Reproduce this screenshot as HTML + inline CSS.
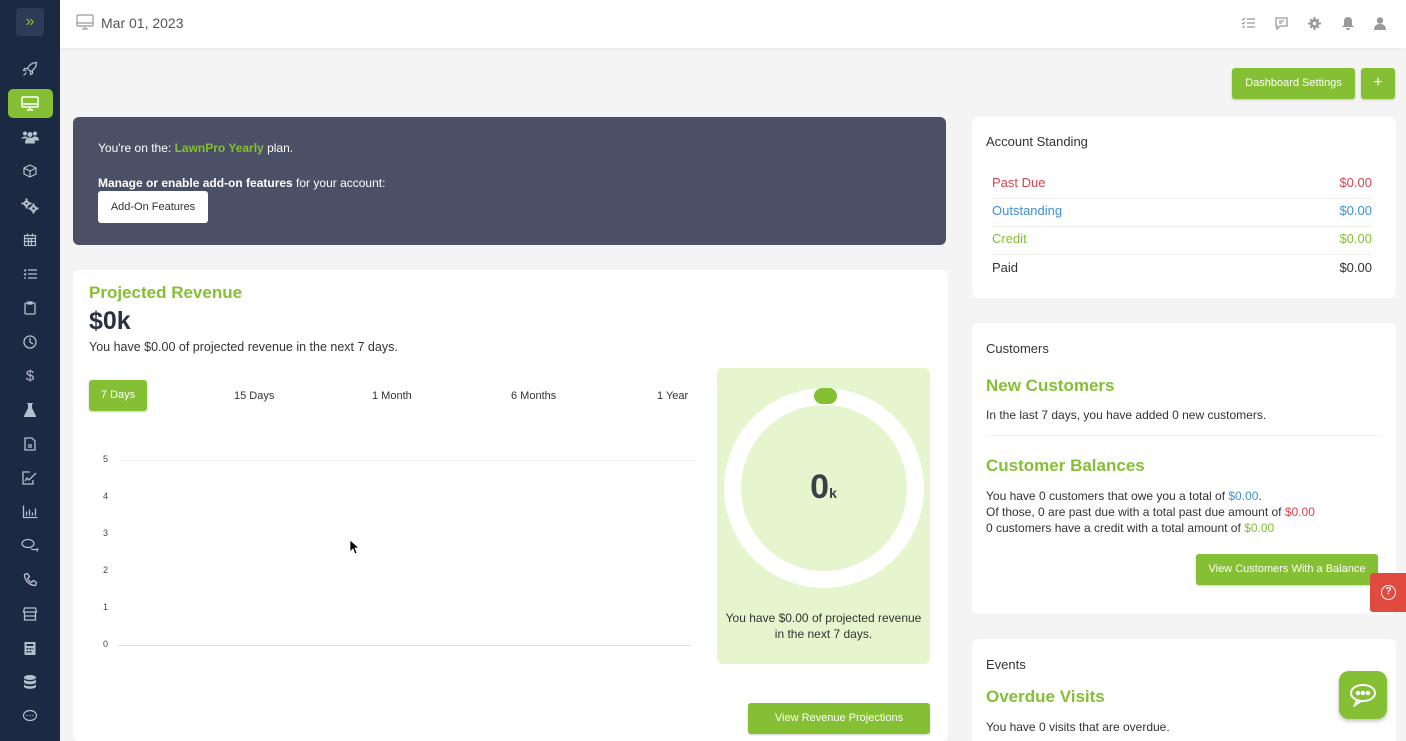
<!DOCTYPE html>
<html style="height:741px;overflow:hidden"><head><meta charset="utf-8"><style>
*{box-sizing:border-box;margin:0;padding:0}
body{width:1406px;height:741px;overflow:hidden;background:#f4f4f4;font-family:"Liberation Sans",sans-serif;color:#333;position:relative;font-size:13px}
.sb{position:absolute;left:0;top:0;width:60px;height:741px;background:#1c2942}
.ic{position:absolute;left:30px;transform:translate(-50%,-50%);color:#b8bfcc;font-size:13px;line-height:1}
.ic svg{display:block}
.top{position:absolute;left:60px;top:0;right:0;height:48px;background:#fff;box-shadow:0 1px 3px rgba(0,0,0,.05)}
.card{position:absolute;background:#fff;border-radius:6px}
.btn{position:absolute;background:#84bf34;color:#fff;border-radius:3px;font-size:11px;text-align:center;box-shadow:0 1px 2px rgba(0,0,0,.2)}
.g{color:#84bf34}
.row{position:absolute;left:20px;right:24px;font-size:13px;display:flex;justify-content:space-between;border-bottom:1px solid #eee;padding-bottom:8px}
.h{font-weight:bold;font-size:17px;color:#84bf34;position:absolute}
.t{position:absolute;font-size:12px;color:#333}
.ti{position:absolute;top:17px}
</style></head><body>
<div class="sb">
 <div style="position:absolute;left:16px;top:8px;width:28px;height:28px;background:#2f3b55;border-radius:4px;color:#84bf34;text-align:center;line-height:27px;font-size:16px">»</div>
 <div style="position:absolute;left:8px;top:89px;width:45px;height:29px;background:#84bf34;border-radius:5px"></div>
 <svg style="position:absolute;left:21px;top:96px" width="18" height="15" viewBox="0 0 18 15" fill="none" stroke="#fff" stroke-width="1.5"><rect x="1" y="1" width="16" height="10" rx="1"/><path d="M1 8h16M6 14h6M9 11v3"/></svg>
 <div class="ic" style="top:69px"><svg width="15" height="15" viewBox="0 0 15 15" fill="none" stroke="#b8bfcc" stroke-width="1.2"><path d="M14 1c-4 0-7 2-9 6l3 3c4-2 6-5 6-9zM5 7L2 7 1 9h3M8 10v3l2-1v-3M4 11l-3 3"/></svg></div>
 <div class="ic" style="top:137px"><svg width="18" height="13" viewBox="0 0 18 13" fill="#b8bfcc"><circle cx="4" cy="3" r="2"/><circle cx="14" cy="3" r="2"/><circle cx="9" cy="4" r="2.5"/><path d="M0 10c0-3 2-4 4-4s3 1 3 2H0zM11 8c0-1 1-2 3-2s4 1 4 4h-7zM4 13c0-4 2-6 5-6s5 2 5 6z"/></svg></div>
 <div class="ic" style="top:171px"><svg width="14" height="14" viewBox="0 0 14 14" fill="none" stroke="#b8bfcc" stroke-width="1.2"><path d="M7 1l6 3v6l-6 3-6-3V4zM1 4l6 3 6-3M7 7v6"/></svg></div>
 <div class="ic" style="top:206px"><svg width="17" height="15" viewBox="0 0 17 15" fill="#b8bfcc"><circle cx="5" cy="5" r="3"/><circle cx="12" cy="10" r="3.3"/><path d="M4 0h2v10H4zM0 4h10v2H0zM11 5h2v10h-2zM7 9h10v2H7z"/><circle cx="5" cy="5" r="1" fill="#1c2942"/><circle cx="12" cy="10" r="1.2" fill="#1c2942"/></svg></div>
 <div class="ic" style="top:240px"><svg width="13" height="13" viewBox="0 0 13 13" fill="none" stroke="#b8bfcc" stroke-width="1.2"><rect x="1" y="2" width="11" height="10"/><path d="M1 5h11M1 8h11M5 5v7M8 5v7M4 0v3M9 0v3"/></svg></div>
 <div class="ic" style="top:274px"><svg width="14" height="12" viewBox="0 0 14 12" fill="none" stroke="#b8bfcc" stroke-width="1.2"><path d="M5 2h9M5 6h9M5 10h9M1 2l1 1 1-2M1 6l1 1 1-2M1 10h2"/></svg></div>
 <div class="ic" style="top:308px"><svg width="12" height="14" viewBox="0 0 12 14" fill="none" stroke="#b8bfcc" stroke-width="1.3"><rect x="1" y="2" width="10" height="11" rx="1"/><path d="M4 1h4v2H4z"/></svg></div>
 <div class="ic" style="top:342px"><svg width="14" height="14" viewBox="0 0 14 14" fill="none" stroke="#b8bfcc" stroke-width="1.3"><circle cx="7" cy="7" r="6"/><path d="M7 3v4l3 2"/></svg></div>
 <div class="ic" style="top:376px;font-size:15px">$</div>
 <div class="ic" style="top:410px"><svg width="12" height="14" viewBox="0 0 12 14" fill="#b8bfcc"><path d="M3 0h6v1H8v4l4 8v1H0v-1l4-8V1H3z"/></svg></div>
 <div class="ic" style="top:444px"><svg width="12" height="14" viewBox="0 0 12 14" fill="none" stroke="#b8bfcc" stroke-width="1.3"><path d="M1 1h7l3 3v9H1z M4 8h4M4 10h4"/></svg></div>
 <div class="ic" style="top:478px"><svg width="16" height="14" viewBox="0 0 16 14" fill="none" stroke="#b8bfcc" stroke-width="1.3"><path d="M11 9v4H1V1h7M3 10l2-3 2 2 7-7"/></svg></div>
 <div class="ic" style="top:512px"><svg width="15" height="13" viewBox="0 0 15 13" fill="none" stroke="#b8bfcc" stroke-width="1.3"><path d="M1 0v12h14M4 10V6M7 10V4M10 10V7M13 10V3"/></svg></div>
 <div class="ic" style="top:546px"><svg width="18" height="15" viewBox="0 0 18 15" fill="none" stroke="#b8bfcc" stroke-width="1.2"><ellipse cx="7" cy="5" rx="6" ry="4"/><path d="M10 10c2 2 6 1 7 0l-1 3"/></svg></div>
 <div class="ic" style="top:580px"><svg width="15" height="15" viewBox="0 0 15 15" fill="none" stroke="#b8bfcc" stroke-width="1.3"><path d="M2 2l3-1 2 3-2 2c1 2 2 3 4 4l2-2 3 2-1 3C7 13 2 8 2 2z"/></svg></div>
 <div class="ic" style="top:614px"><svg width="15" height="14" viewBox="0 0 15 14" fill="none" stroke="#b8bfcc" stroke-width="1.3"><path d="M1 5h13L13 1H2zM2 5v8h11V5M2 9h11"/></svg></div>
 <div class="ic" style="top:648px"><svg width="11" height="14" viewBox="0 0 11 14" fill="#b8bfcc"><path d="M0 1h11v13H0z" /><rect x="2" y="3" width="7" height="2" fill="#1c2942"/><path d="M2 7h2v1.5H2zM5 7h2v1.5H5zM8 7h1v1.5H8zM2 10h2v1.5H2zM5 10h2v1.5H5z" fill="#1c2942"/></svg></div>
 <div class="ic" style="top:682px"><svg width="13" height="14" viewBox="0 0 13 14" fill="#b8bfcc"><ellipse cx="6.5" cy="2.5" rx="6" ry="2.5"/><path d="M.5 4c0 3 12 3 12 0v3c0 3-12 3-12 0zM.5 9c0 3 12 3 12 0v2.5c0 3-12 3-12 0z"/></svg></div>
 <div class="ic" style="top:716px"><svg width="15" height="13" viewBox="0 0 15 13" fill="none" stroke="#b8bfcc" stroke-width="1.2"><ellipse cx="7.5" cy="6" rx="6.5" ry="5"/><path d="M4 6h1M7 6h1M10 6h1"/></svg></div>
</div>
<div class="top">
 <svg style="position:absolute;left:16px;top:14px" width="18" height="16" viewBox="0 0 18 16" fill="none" stroke="#999" stroke-width="1.2"><rect x="1" y="1" width="16" height="11" rx="1"/><path d="M1 9h16M6 15h6M9 12v3"/></svg>
 <div style="position:absolute;left:41px;top:15px;font-size:14px;color:#555">Mar 01, 2023</div>
 <svg class="ti" style="left:1182px" width="13" height="12" viewBox="0 0 13 12" fill="none" stroke="#999" stroke-width="1.2"><path d="M5 2h8M5 6h8M5 10h8M0 2l1 1 2-2M0 6l1 1 2-2M0 10h3"/></svg>
 <svg class="ti" style="left:1215px" width="13" height="13" viewBox="0 0 13 13" fill="none" stroke="#999" stroke-width="1.3"><path d="M1 1h11v8H5l-3 3V9H1z M4 4h5M4 6h3"/></svg>
 <svg class="ti" style="left:1248px" width="13" height="13" viewBox="0 0 13 13" fill="#999"><circle cx="6.5" cy="6.5" r="4.5"/><path d="M5.5 0h2v13h-2zM0 5.5h13v2H0z"/><path d="M1.5 3l1.5-1.5 8.5 8.5-1.5 1.5zM10 1.5l1.5 1.5L3 11.5 1.5 10z"/><circle cx="6.5" cy="6.5" r="1.8" fill="#fff"/></svg>
 <svg class="ti" style="left:1282px" width="12" height="13" viewBox="0 0 12 13" fill="#999"><path d="M6 0c3 0 4 2 4 5v3l2 2H0l2-2V5c0-3 1-5 4-5zM4 11h4a2 2 0 0 1-4 0z"/></svg>
 <svg class="ti" style="left:1314px" width="12" height="13" viewBox="0 0 12 13" fill="#999"><circle cx="6" cy="3.5" r="3.2"/><path d="M0 13c0-4 2-6 6-6s6 2 6 6z"/></svg>
</div>
<div class="btn" style="left:1232px;top:68px;width:123px;height:31px;line-height:31px">Dashboard Settings</div>
<div class="btn" style="left:1361px;top:68px;width:34px;height:31px;line-height:30px;font-size:16px">+</div>

<div class="card" style="left:73px;top:117px;width:873px;height:128px;background:#4b5066;color:#fff">
 <div style="position:absolute;left:25px;top:24px;font-size:12px">You're on the: <b class="g">LawnPro Yearly</b> plan.</div>
 <div style="position:absolute;left:25px;top:59px;font-size:12px"><b>Manage or enable add-on features</b> for your account:</div>
 <div style="position:absolute;left:25px;top:74px;width:110px;height:32px;background:#fff;border-radius:3px;color:#333;font-size:11px;text-align:center;line-height:32px">Add-On Features</div>
</div>

<div class="card" style="left:73px;top:270px;width:875px;height:471px">
 <div class="h" style="left:16px;top:13px">Projected Revenue</div>
 <div style="position:absolute;left:16px;top:37px;font-size:25px;font-weight:bold;color:#2b3140">$0k</div>
 <div class="t" style="left:16px;top:70px;font-size:12.5px">You have $0.00 of projected revenue in the next 7 days.</div>
 <div class="btn" style="left:16px;top:110px;width:58px;height:31px;line-height:31px">7 Days</div>
 <div class="t" style="left:161px;top:120px;font-size:11px">15 Days</div>
 <div class="t" style="left:299px;top:120px;font-size:11px">1 Month</div>
 <div class="t" style="left:438px;top:120px;font-size:11px">6 Months</div>
 <div class="t" style="left:584px;top:120px;font-size:11px">1 Year</div>
 <div style="position:absolute;left:30px;top:184px;width:600px;font-size:9px;color:#444">
  <div style="position:absolute;top:0">5</div><div style="position:absolute;top:37px">4</div><div style="position:absolute;top:74px">3</div><div style="position:absolute;top:111px">2</div><div style="position:absolute;top:148px">1</div><div style="position:absolute;top:185px">0</div>
  <div style="position:absolute;left:15px;top:6px;width:580px;border-top:1px solid #f2f2f2"></div>
  <div style="position:absolute;left:15px;top:191px;width:573px;border-top:1px solid #ddd"></div>
 </div>
 <div style="position:absolute;left:644px;top:98px;width:213px;height:296px;background:#e5f5cd;border-radius:6px">
  <div style="position:absolute;left:7px;top:20px;width:200px;height:200px;border-radius:50%;border:17px solid #fff"></div>
  <div style="position:absolute;left:97px;top:20px;width:23px;height:16px;border-radius:8px;background:#84bf34"></div>
  <div style="position:absolute;left:0;width:213px;top:100px;text-align:center;font-size:34px;font-weight:bold;color:#3b3f48">0<span style="font-size:14px">k</span></div>
  <div style="position:absolute;left:0;width:213px;top:242px;text-align:center;font-size:12px;line-height:16px">You have $0.00 of projected revenue<br>in the next 7 days.</div>
 </div>
 <div class="btn" style="left:675px;top:433px;width:182px;height:31px;line-height:31px">View Revenue Projections</div>
</div>

<div class="card" style="left:972px;top:117px;width:424px;height:181px">
 <div class="t" style="left:14px;top:17px;font-size:13px">Account Standing</div>
 <div class="row" style="top:58px;color:#d9434f"><span>Past Due</span><span>$0.00</span></div>
 <div class="row" style="top:86px;color:#3d8fd9"><span>Outstanding</span><span>$0.00</span></div>
 <div class="row" style="top:114px;color:#84bf34"><span>Credit</span><span>$0.00</span></div>
 <div class="row" style="top:143px;border:0"><span>Paid</span><span>$0.00</span></div>
</div>

<div class="card" style="left:972px;top:323px;width:424px;height:291px">
 <div class="t" style="left:14px;top:18px;font-size:13px">Customers</div>
 <div class="h" style="left:14px;top:53px">New Customers</div>
 <div class="t" style="left:14px;top:85px">In the last 7 days, you have added 0 new customers.</div>
 <div style="position:absolute;left:14px;right:14px;top:112px;border-top:1px solid #eee"></div>
 <div class="h" style="left:14px;top:133px">Customer Balances</div>
 <div class="t" style="left:14px;top:165px;line-height:16px">You have 0 customers that owe you a total of <span style="color:#3d8fd9">$0.00</span>.<br>Of those, 0 are past due with a total past due amount of <span style="color:#d9434f">$0.00</span><br>0 customers have a credit with a total amount of <span class="g">$0.00</span></div>
 <div class="btn" style="left:224px;top:231px;width:182px;height:31px;line-height:31px">View Customers With a Balance</div>
</div>

<div class="card" style="left:972px;top:639px;width:424px;height:102px;border-radius:6px 6px 0 0">
 <div class="t" style="left:14px;top:18px;font-size:13px">Events</div>
 <div class="h" style="left:14px;top:48px">Overdue Visits</div>
 <div class="t" style="left:14px;top:81px">You have 0 visits that are overdue.</div>
</div>

<div style="position:absolute;left:1370px;top:573px;width:36px;height:39px;background:#e04a3f;border-radius:3px 0 0 3px">
 <div style="position:absolute;left:11px;top:12px;width:15px;height:15px;border:1.5px solid #fff;border-radius:50%;color:#fff;font-size:10px;text-align:center;line-height:12px;font-weight:bold">?</div>
</div>
<div style="position:absolute;left:1339px;top:671px;width:48px;height:48px;background:#84bf34;border-radius:10px;box-shadow:0 2px 4px rgba(0,0,0,.25)">
 <svg style="position:absolute;left:10px;top:12px" width="28" height="24" viewBox="0 0 28 24" fill="none" stroke="#fff" stroke-width="2"><ellipse cx="14" cy="10" rx="12" ry="8"/><path d="M8 17l-2 5 6-4"/><circle cx="9" cy="10" r="1.3" fill="#fff"/><circle cx="14" cy="10" r="1.3" fill="#fff"/><circle cx="19" cy="10" r="1.3" fill="#fff"/></svg>
</div>
<svg style="position:absolute;left:349px;top:539px" width="10" height="16" viewBox="0 0 10 16"><path d="M1 1v12l3-3 2 5 2-1-2-5h4z" fill="#000" stroke="#fff" stroke-width=".8"/></svg>
</body></html>
